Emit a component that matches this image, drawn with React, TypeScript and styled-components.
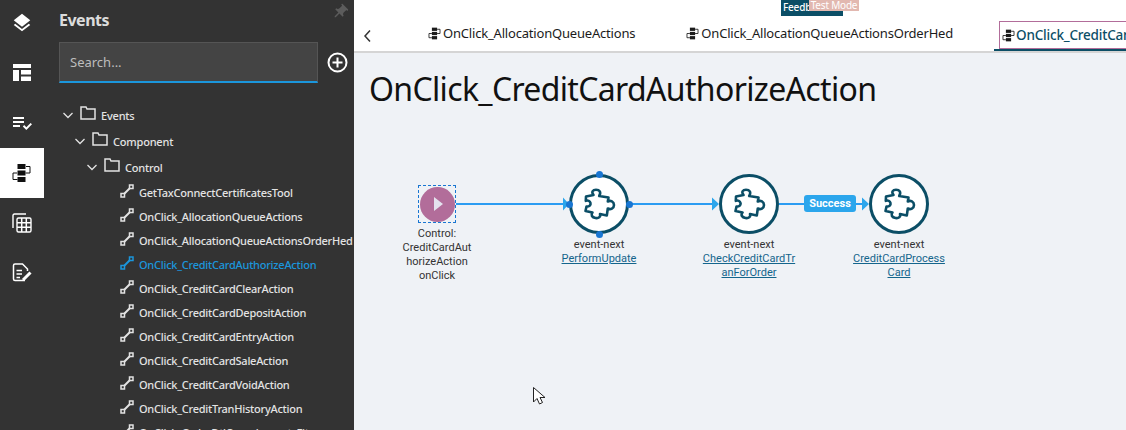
import React from "react";
import styled, { createGlobalStyle } from "styled-components";
import { MdLayers, MdPlaylistAddCheck, MdPushPin } from "react-icons/md";

const Global = createGlobalStyle`
  html, body { margin: 0; padding: 0; height: 100%; overflow: hidden; background: #eff2f6; }
  #root { height: 100%; }
  * { box-sizing: border-box; }
`;

const Page = styled.div`
  position: relative; display: flex; width: 1126px; height: 430px; overflow: hidden;
  font-family: "Noto Sans", "Liberation Sans", sans-serif;
`;
const Rail = styled.nav`
  width: 44px; flex: none; background: #333; display: flex; flex-direction: column;
  > :first-child { margin-top: -2px; }
`;
const RailItem = styled.div<{ $active?: boolean }>`
  height: 50px; flex: none; display: flex; align-items: center; justify-content: center;
  background: ${p => (p.$active ? "#fff" : "transparent")};
  color: ${p => (p.$active ? "#111" : "#fff")};
`;
const Panel = styled.aside`
  position: relative; width: 310px; flex: none; background: #333; color: #e6e6e6; overflow: hidden;
  display: flex; flex-direction: column; padding: 0 0 0 15px;
`;
const PanelTitle = styled.h2`
  margin: 8px 0 0; height: 24px; font-size: 16px; line-height: 24px; font-weight: 700; color: #dcdcdc; letter-spacing: -0.5px;
`;
const Pin = styled.div`
  position: absolute; right: 5px; top: 3px; color: #5c5c5c; transform: rotate(45deg); display: flex;
`;
const SearchRow = styled.div`
  display: flex; align-items: center; gap: 9px; margin-top: 10px;
`;
const Search = styled.div`
  width: 259px; height: 41px; background: #444; border: 1px solid #555; border-bottom: 2px solid #1b96dc;
  color: #bdbdbd; font-size: 13px; line-height: 38px; padding-left: 10px;
`;
const Tree = styled.ul`
  list-style: none; margin: 19px 0 0; padding: 0;
`;
const Row = styled.li<{ $level: number; $active?: boolean; $folder?: boolean }>`
  display: flex; align-items: center; white-space: nowrap; height: ${p => (p.$folder ? "26px" : "24px")};
  padding-left: ${p => (p.$folder ? 2 + p.$level * 12 : 61)}px;
  color: ${p => (p.$active ? "#1b96dc" : "#e3e3e3")};
  font-size: 11px; font-weight: 500; letter-spacing: ${p => (p.$folder ? "-0.2px" : "-0.25px")};
`;
const Chevron = styled.svg`
  width: 14px; height: 14px; flex: none; margin-right: 5px; margin-top: -1px;
`;
const FolderIcon = styled.svg`
  width: 16px; height: 14px; flex: none; margin-right: 5px; margin-top: -4px;
`;
const EdgeIcon = styled.svg`
  width: 14px; height: 14px; flex: none; margin-right: 5px; margin-top: -3px;
`;
const Main = styled.main`
  flex: 1; min-width: 0; display: flex; flex-direction: column; position: relative;
`;
const TabBar = styled.div`
  height: 53px; flex: none; background: #fff; border-bottom: 2px solid #d5d5d5; display: flex; align-items: flex-end; overflow: hidden;
`;
const Back = styled.svg`
  width: 12px; height: 14px; flex: none; margin: 0 0 8px 8px;
`;
const Tab = styled.div<{ $left: number }>`
  flex: none; margin: 0 0 6px ${p => p.$left}px; height: 24px; display: flex; align-items: center; gap: 2px; white-space: nowrap;
  font-size: 13px; letter-spacing: -0.19px; color: #1b1b1b;
`;
const ActiveTab = styled.div<{ $left: number }>`
  flex: none; margin-left: ${p => p.$left}px; height: 30px; padding-left: 5px; border-bottom: 2px solid #0b4e66; white-space: nowrap;
`;
const ActiveInner = styled.div`
  height: 28px; display: flex; align-items: center; gap: 1px; padding-left: 2px; padding-right: 40px;
  border: 1px solid #b26d9a; font-size: 13.5px; font-weight: 500; letter-spacing: -0.2px; color: #0b4e66;
`;
const FlowIcon = styled.svg`
  width: 13px; height: 13px; flex: none; color: #1b1b1b;
`;
const Content = styled.section`
  flex: 1; position: relative; background: #eff2f6; padding: 16px 0 0 15px;
`;
const Title = styled.h1`
  margin: 0; font-size: 32px; line-height: 40px; font-weight: 400; color: #111; letter-spacing: -0.66px; white-space: nowrap;
`;
const Edges = styled.svg`
  position: absolute; left: 0; top: 0; width: 772px; height: 377px;
`;
const StartFrame = styled.div`
  position: absolute; left: 64px; top: 132px; width: 38px; height: 38px; border: 1px dashed #1976d2;
  display: flex; align-items: center; justify-content: center;
`;
const StartCircle = styled.div`
  width: 35px; height: 35px; border-radius: 50%; background: #b26d9a; display: flex; align-items: center; justify-content: center;
`;
const Play = styled.div`
  width: 0; height: 0; border-left: 9px solid #e4e2ee; border-top: 7px solid transparent; border-bottom: 7px solid transparent; margin-left: 3px;
`;
const TaskNode = styled.div<{ $x: number }>`
  position: absolute; left: ${p => p.$x - 30}px; top: 121px; width: 60px; height: 60px; border-radius: 50%;
  border: 3px solid #0b4e66; background: #fff; display: flex; align-items: center; justify-content: center;
`;
const Port = styled.span<{ $x: number; $y: number }>`
  position: absolute; left: ${p => p.$x - 3.5}px; top: ${p => p.$y - 3.5}px; width: 7px; height: 7px; border-radius: 50%; background: #1976d2;
`;
const Caption = styled.div<{ $x: number; $y: number }>`
  position: absolute; left: ${p => p.$x - 55}px; top: ${p => p.$y}px; width: 110px; text-align: center;
  font-family: Roboto, "Liberation Sans", sans-serif; font-size: 11px; line-height: 14px; color: #333;
`;
const CaptionLine = styled.span`
  display: block;
`;
const NodeLink = styled.a`
  color: #14658c; text-decoration: underline; display: block;
`;
const Badge = styled.div`
  position: absolute; left: 450px; top: 142px; width: 52px; height: 17px; border-radius: 3px; background: #2ba6ec; color: #fff;
  font-family: Roboto, "Liberation Sans", sans-serif; font-size: 11px; font-weight: 700; line-height: 17px; text-align: center;
`;
const Feedback = styled.div`
  position: absolute; left: 781px; top: 0; width: 62px; height: 16px; background: #0b4e66; color: #fff; font-size: 10px; line-height: 14px; padding-left: 2px; overflow: hidden; white-space: nowrap; font-weight: 500; letter-spacing: -0.2px;
`;
const TestMode = styled.div`
  position: absolute; left: 809px; top: 0; width: 50px; height: 11px; background: #e2b8b0; color: #fff; font-size: 10px; line-height: 10px; text-align: center; letter-spacing: -0.2px; white-space: nowrap;
`;
const Cursor = styled.svg`
  position: absolute; left: 532px; top: 386px; width: 15px; height: 21px;
`;

const Puzzle = () => (
  <svg width="38" height="36" viewBox="0 0 38 36" fill="none" stroke="#0b4e66" strokeWidth="2.6" strokeLinejoin="round" strokeLinecap="round">
    <path d="M6 10.5 L13.500 9 C11 5.500 13 3.800 16 3.800 C19.500 3.800 21.500 6 19.200 10 L28.500 11.500 L27.800 15.500 C30.500 14 34 15.500 34 19 C34 22.500 30.500 24 27.800 22.500 L26.800 29.500 L20 28 C21 31 18.500 32.500 15.500 32 C12 31.500 10.500 29 12.500 26.500 L5.500 25 L6.500 20.500 C9 20.800 11 19.200 10.500 17 C10 15 8 14 5.800 14.800 Z" />
  </svg>
);

const Flow = () => (
  <FlowIcon viewBox="0 0 20 20" fill="none">
    <rect x="6" y="1" width="8" height="5" fill="currentColor" />
    <rect x="6" y="7.500" width="8" height="5" fill="currentColor" />
    <rect x="6" y="14" width="8" height="5" fill="currentColor" />
    <path d="M14 3.500h4.500v6.500H14M6 10H1.500v6.500H6" stroke="currentColor" strokeWidth="1.300" />
  </FlowIcon>
);

const Edge = ({ color }: { color: string }) => (
  <EdgeIcon viewBox="0 0 14 14" fill="none">
    <rect x="1" y="9.500" width="3.500" height="3.500" stroke={color} strokeWidth="1.500" />
    <rect x="9.500" y="1" width="3.500" height="3.500" stroke={color} strokeWidth="1.500" />
    <path d="M4 10L10 4" stroke={color} strokeWidth="2" />
  </EdgeIcon>
);

const Folder = () => (
  <FolderIcon viewBox="0 0 16 14" fill="none" stroke="#e3e3e3" strokeWidth="1.500">
    <path d="M1 3V1h5l1 2h8v10H1z" />
  </FolderIcon>
);

const Down = () => (
  <Chevron viewBox="0 0 14 14" fill="none" stroke="#e3e3e3" strokeWidth="1.300"><path d="M2.500 5l4.500 4.500L11.500 5" /></Chevron>
);

const items = [
  "GetTaxConnectCertificatesTool", "OnClick_AllocationQueueActions", "OnClick_AllocationQueueActionsOrderHed",
  "OnClick_CreditCardAuthorizeAction", "OnClick_CreditCardClearAction", "OnClick_CreditCardDepositAction",
  "OnClick_CreditCardEntryAction", "OnClick_CreditCardSaleAction", "OnClick_CreditCardVoidAction",
  "OnClick_CreditTranHistoryAction", "OnClick_OrderDtlComplementsFit",
];

export default function App() {
  return (
    <Page>
      <Global />
      <Rail>
        <RailItem><MdLayers size={22} /></RailItem>
        <RailItem>
          <svg width="20" height="20" viewBox="0 0 20 20" fill="#fff"><rect x="1" y="1" width="18" height="4" /><rect x="1" y="7" width="6" height="11" /><rect x="9" y="7" width="10" height="4.500" /><rect x="9" y="13.500" width="10" height="4.500" /></svg>
        </RailItem>
        <RailItem><MdPlaylistAddCheck size={24} /></RailItem>
        <RailItem $active><svg width="20" height="20" viewBox="0 0 20 20" fill="none"><rect x="5.500" y="1" width="8" height="5" fill="#111" /><rect x="5.500" y="7.500" width="8" height="5" fill="#111" /><rect x="5.500" y="14" width="8" height="5" fill="#111" /><path d="M14 3.500h4v6.500h-4.500M5 10H1v6.500h4.500" stroke="#111" strokeWidth="1" /></svg></RailItem>
        <RailItem>
          <svg width="20" height="20" viewBox="0 0 20 20" fill="none" stroke="#fff"><path d="M1 15V2.500Q1 1 2.500 1H14" strokeWidth="1.400" /><rect x="5" y="5" width="14" height="14" rx="1.500" strokeWidth="1.400" /><path d="M9.700 5v14M14.300 5v14M5 9.700h14M5 14.300h14" strokeWidth="1.500" /></svg>
        </RailItem>
        <RailItem>
          <svg width="20" height="20" viewBox="0 0 20 20" fill="none" stroke="#fff" strokeWidth="1.500"><path d="M13 17.500H3Q1.500 17.500 1.500 16V2.500Q1.500 1 3 1H10.500L15.500 6V8" /><path d="M4.500 7.500H10M4.500 11H10M4.500 14.500H8" /><path d="M11 17L18.500 9.500" strokeWidth="3" /></svg>
        </RailItem>
      </Rail>
      <Panel>
        <PanelTitle>Events</PanelTitle>
        <Pin><MdPushPin size={18} /></Pin>
        <SearchRow>
          <Search>Search...</Search>
          <svg width="21" height="21" viewBox="0 0 21 21" fill="none" stroke="#fff" strokeWidth="2"><circle cx="10.500" cy="10.500" r="9" /><path d="M10.500 5.500v10M5.500 10.500h10" /></svg>
        </SearchRow>
        <Tree>
          <Row $folder $level={0}><Down /><Folder />Events</Row>
          <Row $folder $level={1}><Down /><Folder />Component</Row>
          <Row $folder $level={2}><Down /><Folder />Control</Row>
          {items.map((t, i) => (
            <Row key={t} $level={3} $active={i === 3}><Edge color={i === 3 ? "#1b96dc" : "#e3e3e3"} />{t}</Row>
          ))}
        </Tree>
      </Panel>
      <Main>
        <TabBar>
          <Back viewBox="0 0 12 14" fill="none" stroke="#333" strokeWidth="1.500"><path d="M8 1.500L3 7l5 5.500" /></Back>
          <Tab $left={54}><Flow />OnClick_AllocationQueueActions</Tab>
          <Tab $left={51}><Flow />OnClick_AllocationQueueActionsOrderHed</Tab>
          <ActiveTab $left={41}><ActiveInner><Flow />OnClick_CreditCardAuthorizeAction</ActiveInner></ActiveTab>
        </TabBar>
        <Content>
          <Title>OnClick_CreditCardAuthorizeAction</Title>
          <Edges viewBox="0 0 772 377" fill="none">
            <path d="M102 151H214M275 151H364M425 151H514" stroke="#2b9cf2" strokeWidth="2" />
            <path d="M209 144.500l6 6.500-6 6.500zM358 144.500l7 6.500-7 6.500zM508 144.500l7 6.500-7 6.500z" fill="#2ba6ec" />
          </Edges>
          <StartFrame><StartCircle><Play /></StartCircle></StartFrame>
          <Caption $x={83} $y={174}>
            <CaptionLine>Control:</CaptionLine><CaptionLine>CreditCardAut</CaptionLine><CaptionLine>horizeAction</CaptionLine><CaptionLine>onClick</CaptionLine>
          </Caption>
          <TaskNode $x={245}><Puzzle /></TaskNode>
          <Port $x={215} $y={151} /><Port $x={275} $y={151} /><Port $x={245} $y={121} /><Port $x={245} $y={181} />
          <Caption $x={245} $y={185}><CaptionLine>event-next</CaptionLine><NodeLink>PerformUpdate</NodeLink></Caption>
          <TaskNode $x={395}><Puzzle /></TaskNode>
          <Caption $x={395} $y={185}><CaptionLine>event-next</CaptionLine><NodeLink>CheckCreditCardTr</NodeLink><NodeLink>anForOrder</NodeLink></Caption>
          <TaskNode $x={545}><Puzzle /></TaskNode>
          <Caption $x={545} $y={185}><CaptionLine>event-next</CaptionLine><NodeLink>CreditCardProcess</NodeLink><NodeLink>Card</NodeLink></Caption>
          <Badge>Success</Badge>
        </Content>
      </Main>
      <Feedback>Feedback</Feedback>
      <TestMode>Test Mode</TestMode>
      <Cursor viewBox="0 0 15 21"><path d="M1.500 1.500V16L5 12.500L7.500 18L10.500 16.500L8 11.500H13Z" fill="#fff" stroke="#222" strokeWidth="1" /></Cursor>
    </Page>
  );
}
